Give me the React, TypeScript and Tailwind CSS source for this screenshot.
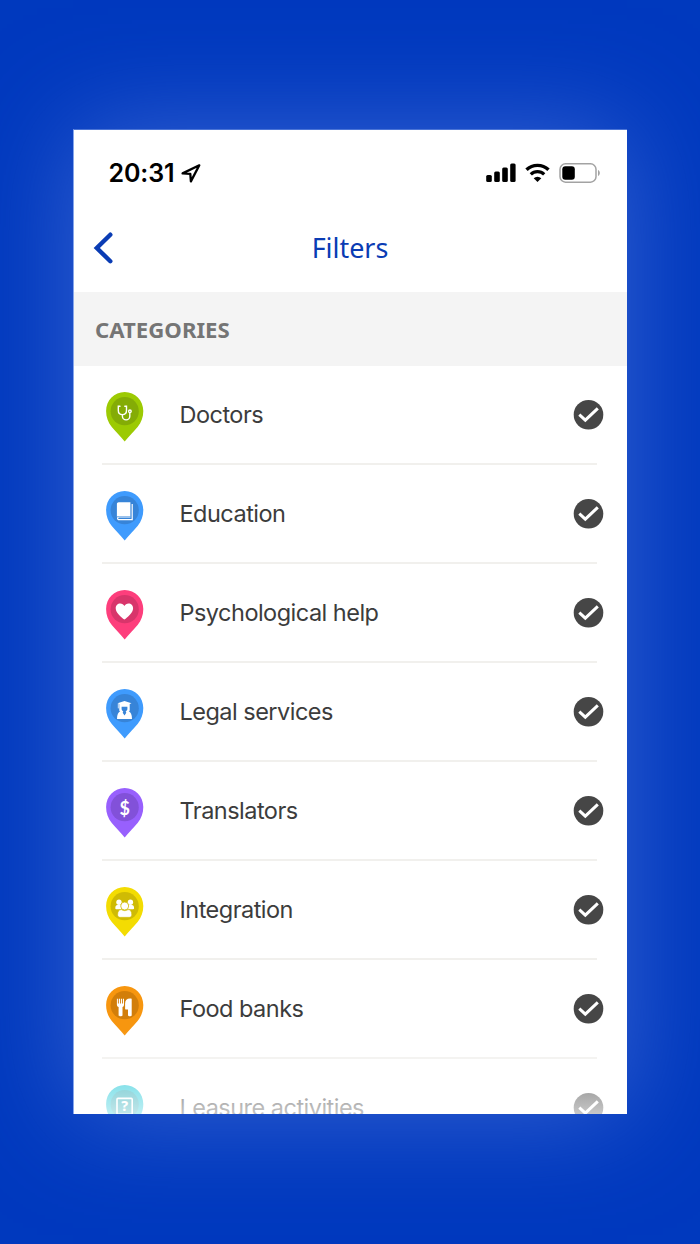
import type { ReactNode } from 'react';

interface Category {
  label: string;
  pin: string;
  disc: string;
  glyph: ReactNode;
}

const categories: Category[] = [
  {
    label: 'Doctors',
    pin: '#9cca03',
    disc: '#84ac06',
    glyph: (
      <g fill="none" stroke="#fff" strokeWidth="1.4" strokeLinecap="round">
        <path d="M14 14.3h-1.700v4.200c0 2.400 1.800 4.100 4.100 4.100s4.100-1.700 4.100-4.100v-4.200h-1.700" />
        <path d="M16.400 22.600v1.600a3.700 3.700 0 0 0 7.400 0v-3.400" />
        <circle cx="23.9" cy="19.3" r="1.3" />
      </g>
    ),
  },
  {
    label: 'Education',
    pin: '#3f9bfd',
    disc: '#3784d8',
    glyph: (
      <g>
        <path d="M12.700 11.300H24.400V25H12.900c-.8 0-1.400.3-2 .8V13.100c0-1 .8-1.800 1.800-1.800z" fill="#fff" />
        <path d="M26.200 13v15.600H12.900a1.300 1.300 0 0 1 0-2.600H24.600" fill="none" stroke="#fff" strokeWidth="1.2" />
      </g>
    ),
  },
  {
    label: 'Psychological help',
    pin: '#fd3e7c',
    disc: '#d8356b',
    glyph: (
      <path
        d="M18.400 29.600c-3-2.400-8.700-6.600-8.700-11.400 0-2.800 2.100-4.800 4.500-4.800 1.900 0 3.400 1 4.200 2.700.8-1.700 2.300-2.700 4.200-2.700 2.400 0 4.500 2 4.500 4.800 0 4.800-5.700 9-8.700 11.400z"
        fill="#fff"
      />
    ),
  },
  {
    label: 'Legal services',
    pin: '#3f9bfd',
    disc: '#3784d8',
    glyph: (
      <g>
        <path d="M18.500 12l7 2.300-1.800.7v6.200c0 .6-.4 1-1 1 2 .8 3.300 3.200 3.300 7.800H11c0-4.600 1.300-7 3.300-7.800-.6 0-1-.4-1-1V15l-1.800-.7z" fill="#fff" />
        <path d="M15.600 17.700h5.800v2.200c0 1-.8 1.900-1.700 2.300l.6 1.600-1.800 2.600-1.800-2.600.6-1.600c-.9-.4-1.700-1.300-1.700-2.300z" fill="#3784d8" />
        <path d="M12.300 14.800v4.600" stroke="#fff" strokeWidth=".8" />
      </g>
    ),
  },
  {
    label: 'Translators',
    pin: '#9860fd',
    disc: '#8251d9',
    glyph: (
      <text
        x="18.7"
        y="27.2"
        textAnchor="middle"
        fill="#fff"
        className="font-['Lato',sans-serif] text-[18px] font-bold"
      >
        $
      </text>
    ),
  },
  {
    label: 'Integration',
    pin: '#f3dc02',
    disc: '#cfbb04',
    glyph: (
      <g fill="#fff">
        <circle cx="13" cy="15.2" r="2.7" />
        <circle cx="24.4" cy="15.2" r="2.7" />
        <path d="M9.300 21.200c0-2 .9-3.200 2.200-3.200h3.500l1.200 4.300h-5.300c-1 0-1.600-.3-1.600-1.100zM28.100 21.200c0-2-.9-3.200-2.200-3.200h-3.500l-1.200 4.300h5.300c1 0 1.600-.3 1.600-1.100z" />
        <circle cx="18.7" cy="19" r="4" stroke="#cfbb04" strokeWidth=".8" />
        <path
          d="M15.300 22.600c1 .8 2 1.100 3.400 1.100s2.400-.3 3.400-1.100c2.500.1 3.600 2 3.600 5.200 0 1.500-.8 2.500-2.400 2.500h-9.200c-1.600 0-2.400-1-2.400-2.500 0-3.200 1.100-5.100 3.600-5.200z"
          stroke="#cfbb04"
          strokeWidth=".5"
        />
      </g>
    ),
  },
  {
    label: 'Food banks',
    pin: '#f7960f',
    disc: '#d27e0a',
    glyph: (
      <g fill="#fff">
        <path d="M10.900 12.700h1v4.700h.9v-4.700h1.200v4.700h.9v-4.700h1.200v4.700h.9v-4.700h1v6c0 1.300-.6 2-1.500 2.400v8c0 .8-.5 1.200-1.300 1.200h-1.300c-.8 0-1.300-.4-1.300-1.200v-8c-1-.4-1.700-1.100-1.700-2.400z" />
        <path d="M23.800 12.500h1.300c.4 0 .6.2.6.6v16c0 .8-.5 1.200-1.200 1.200h-1.300c-.8 0-1.200-.4-1.200-1.200V23.600h-2.400c-.3 0-.5-.2-.5-.5v-5.700c0-3 1.900-4.900 4.700-4.900z" />
      </g>
    ),
  },
  {
    label: 'Leasure activities',
    pin: '#25c9d8',
    disc: '#2fadb8',
    glyph: (
      <g>
        <rect x="11" y="13.4" width="15.2" height="16" rx="1" fill="none" stroke="#fff" strokeWidth="1.6" />
        <text
          x="18.6"
          y="26.4"
          textAnchor="middle"
          fill="#fff"
          className="font-['Noto_Sans',sans-serif] text-[14px] font-extrabold"
        >
          ?
        </text>
      </g>
    ),
  },
];

function StatusBar() {
  return (
    <div className="flex h-[86px] items-center justify-between pr-[26.5px] pl-[34.5px]">
      <div className="flex items-center gap-1.5">
        <span className="font-['Inter',sans-serif] text-[25px] leading-8 font-semibold tracking-[-0.1px] text-black">
          20:31
        </span>
        <svg width="20" height="19" viewBox="0 0 20 19" fill="none">
          <path
            d="M18.300 1.300L1.600 9.400l7.700.5.600 7.500z"
            stroke="#000"
            strokeWidth="2.3"
            strokeLinejoin="round"
          />
        </svg>
      </div>

      <div className="flex items-center">
        {/* Signal */}
        <svg width="30" height="20" viewBox="0 0 30 20">
          <rect x="0.2" y="12" width="5.6" height="7" rx="1.5" />
          <rect x="8.2" y="8.5" width="5.6" height="10.5" rx="1.5" />
          <rect x="16.2" y="4.5" width="5.6" height="14.5" rx="1.5" />
          <rect x="24.2" y="0.6" width="5.4" height="18.4" rx="1.5" />
        </svg>
        {/* Wifi */}
        <svg className="ml-[9px]" width="25" height="20" viewBox="0 0 25 20" fill="none" stroke="#000">
          <path d="M1.500 6.800a15.800 15.800 0 0 1 22 0" strokeWidth="3.4" />
          <path d="M5.800 11.300a9.600 9.600 0 0 1 13.400 0" strokeWidth="3.2" />
          <path d="M8.700 15.200a5.500 5.500 0 0 1 7.600 0L12.500 19z" fill="#000" stroke="none" />
        </svg>
        {/* Battery */}
        <svg className="ml-[9px]" width="42" height="20" viewBox="0 0 42 20">
          <rect x="1" y="0.8" width="36" height="18.4" rx="5.5" fill="none" stroke="#a3a3a3" strokeWidth="1.5" />
          <rect x="3.3" y="3.2" width="12.5" height="13.6" rx="3" />
          <path d="M39 7c2.400 1 2.400 5 0 6z" fill="#a3a3a3" />
        </svg>
      </div>
    </div>
  );
}

function Pin({ pin, disc, glyph }: Omit<Category, 'label'>) {
  return (
    <svg className="mt-1 shrink-0" width="38" height="50" viewBox="0 0 38 50">
      <path
        d="M18.700 0C8.300 0 .1 8.400.1 19c0 6.200 2 11.400 5.700 16.100C9.300 39.600 14.200 43.900 18.700 49.500c4.500-5.600 9.400-9.900 12.900-14.400 3.700-4.700 5.700-9.900 5.700-16.100C37.300 8.400 29.100 0 18.700 0z"
        fill={pin}
      />
      <circle cx="18.7" cy="19.2" r="14.1" fill={disc} />
      {glyph}
    </svg>
  );
}

function CategoryRow({ label, pin, disc, glyph }: Category) {
  return (
    <li className="mr-[30px] ml-[28px] flex h-[99px] shrink-0 items-center border-b-2 border-[#f1f0ed] pl-1">
      <Pin pin={pin} disc={disc} glyph={glyph} />
      <span className="ml-[35.5px] flex-1 font-['Inter',sans-serif] text-[23.5px] leading-8 tracking-[-0.52px] whitespace-nowrap text-[#3c3c3c]">
        {label}
      </span>
      <svg className="-mr-[7px] shrink-0" width="31" height="30" viewBox="0 0 31 30">
        <circle cx="15.5" cy="14.8" r="14.8" fill="#464646" />
        <path d="M6.300 14.600l6 5.500 12.500-11.800" fill="none" stroke="#fff" strokeWidth="3" />
      </svg>
    </li>
  );
}

export default function App() {
  return (
    <div className="h-[1244px] w-[700px] overflow-hidden bg-[#0039be] pt-[129px] pl-[73px]">
      <div className="relative flex h-[985px] w-[554px] flex-col overflow-hidden border-t border-l border-t-[#4a74d6] border-l-[#86a6ec] bg-white shadow-[0_0_100px_0_#3562d2]">
        <StatusBar />

        <header className="grid h-[76px] grid-cols-[1fr_auto_1fr] items-center pr-px pb-3">
          <svg className="ml-[19px]" width="22" height="32" viewBox="0 0 22 32" fill="none">
            <path d="M17.300 2.700L3.800 16l13.500 13.200" stroke="#0a3cb4" strokeWidth="4.4" strokeLinecap="round" />
          </svg>
          <h1 className="font-['Noto_Sans',sans-serif] text-[26.9px] leading-9 text-[#0a3cb4]">Filters</h1>
        </header>

        <h2 className="flex h-[74px] shrink-0 items-center bg-[#f4f4f4] pt-0.5 pl-[21px] font-['Noto_Sans',sans-serif] text-[22.2px] font-bold text-[#757575]">
          CATEGORIES
        </h2>

        <ul className="flex flex-1 flex-col overflow-hidden">
          {categories.map((category) => (
            <CategoryRow key={category.label} {...category} />
          ))}
        </ul>

        {/* Fade at the end of the list */}
        <div className="absolute inset-x-0 bottom-0 h-[84px] bg-linear-to-b from-white/0 to-white/70" />
      </div>
    </div>
  );
}
